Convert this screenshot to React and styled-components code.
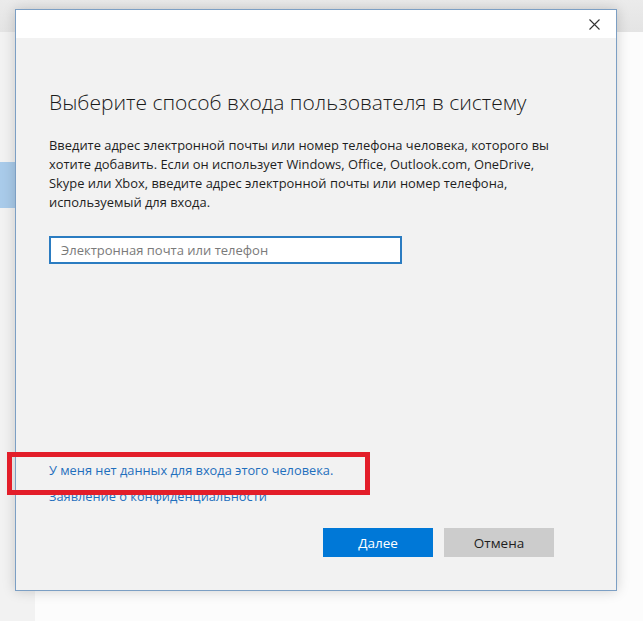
import styled, { createGlobalStyle } from "styled-components";

const Global = createGlobalStyle`
  html, body {
    margin: 0;
    padding: 0;
    background: #ffffff;
  }
  body {
    font-family: "Open Sans", "Noto Sans", sans-serif;
  }
`;

const Page = styled.div`
  position: relative;
  width: 643px;
  height: 621px;
  display: flex;
  flex-direction: column;
  overflow: hidden;
`;

const TopBar = styled.div`
  height: 32px;
  background: linear-gradient(#ebebeb, #e4e4e4);
  box-shadow: 0 1px 3px rgba(0, 0, 0, 0.06);
`;

const Body = styled.div`
  flex: 1;
  display: flex;
`;

const Sidebar = styled.div`
  width: 35px;
  background: #f2f2f2;
  display: flex;
  flex-direction: column;
  padding-top: 130px;
`;

const SideItem = styled.div`
  height: 46px;
  width: 16px;
  background: ${(p) => (p.$selected ? "#a9cbea" : "transparent")};
`;

const Main = styled.div`
  flex: 1;
  background: #fcfcfc;
`;

const Dialog = styled.div`
  position: absolute;
  left: 15px;
  top: 9px;
  width: 600px;
  height: 580px;
  border: 1px solid #7c9fc4;
  background: #f2f2f2;
  display: flex;
  flex-direction: column;
  box-shadow: 0 0 12px rgba(0, 0, 0, 0.18);
`;

const TitleBar = styled.div`
  height: 28px;
  background: #ffffff;
  display: flex;
  justify-content: flex-end;
  align-items: center;
  padding-right: 8px;
`;

const CloseButton = styled.button`
  width: 28px;
  height: 28px;
  border: none;
  background: transparent;
  padding: 0;
  display: flex;
  align-items: center;
  justify-content: center;
  cursor: pointer;
`;

const Content = styled.div`
  flex: 1;
  display: flex;
  flex-direction: column;
  padding: 50px 62px 33px 33px;
`;

const Title = styled.h1`
  margin: 0;
  font-size: 21px;
  line-height: 28px;
  font-weight: 300;
  color: #1a1a1a;
`;

const Text = styled.p`
  margin: 20px 0 0;
  font-size: 12.9px;
  line-height: 19px;
  color: #1e1e1e;
`;

const Input = styled.input`
  box-sizing: border-box;
  margin-top: 24px;
  width: 353px;
  height: 28px;
  border: 2px solid #2b7cc1;
  background: #ffffff;
  padding: 0 10px;
  font-family: inherit;
  font-size: 13px;
  outline: none;
  color: #1e1e1e;

  &::placeholder {
    color: #7a7a7a;
  }
`;

const Spacer = styled.div`
  flex: 1;
`;

const Links = styled.div`
  display: flex;
  flex-direction: column;
  gap: 7px;
`;

const Link = styled.a`
  font-size: 12.8px;
  line-height: 19px;
  color: #1f6fbd;
  text-decoration: none;
  cursor: pointer;
`;

const Buttons = styled.div`
  margin-top: 22px;
  display: flex;
  justify-content: flex-end;
  gap: 11px;
`;

const Button = styled.button`
  width: 110px;
  height: 29px;
  border: none;
  font-family: inherit;
  font-size: 13.5px;
  color: ${(p) => (p.$primary ? "#ffffff" : "#1e1e1e")};
  background: ${(p) => (p.$primary ? "#0078d7" : "#cccccc")};
  cursor: pointer;
`;

const Highlight = styled.div`
  position: absolute;
  left: 7px;
  top: 452px;
  width: 363px;
  height: 43px;
  box-sizing: border-box;
  border: 5px solid #e31e2a;
  pointer-events: none;
`;

export default function App() {
  return (
    <>
      <Global />
      <Page>
        <TopBar />
        <Body>
          <Sidebar>
            <SideItem $selected />
          </Sidebar>
          <Main />
        </Body>

        <Dialog>
          <TitleBar>
            <CloseButton aria-label="Закрыть">
              <svg width="11" height="11" viewBox="0 0 11 11">
                <path d="M0.5 0.5 L10.5 10.5 M10.5 0.5 L0.5 10.5" stroke="#333" strokeWidth="1.1" fill="none" />
              </svg>
            </CloseButton>
          </TitleBar>
          <Content>
            <Title>Выберите способ входа пользователя в систему</Title>
            <Text>
              Введите адрес электронной почты или номер телефона человека, которого вы
              <br />
              хотите добавить. Если он использует Windows, Office, Outlook.com, OneDrive,
              <br />
              Skype или Xbox, введите адрес электронной почты или номер телефона,
              <br />
              используемый для входа.
            </Text>
            <Input placeholder="Электронная почта или телефон" />
            <Spacer />
            <Links>
              <Link>У меня нет данных для входа этого человека.</Link>
              <Link>Заявление о конфиденциальности</Link>
            </Links>
            <Buttons>
              <Button $primary>Далее</Button>
              <Button>Отмена</Button>
            </Buttons>
          </Content>
        </Dialog>

        <Highlight />
      </Page>
    </>
  );
}
